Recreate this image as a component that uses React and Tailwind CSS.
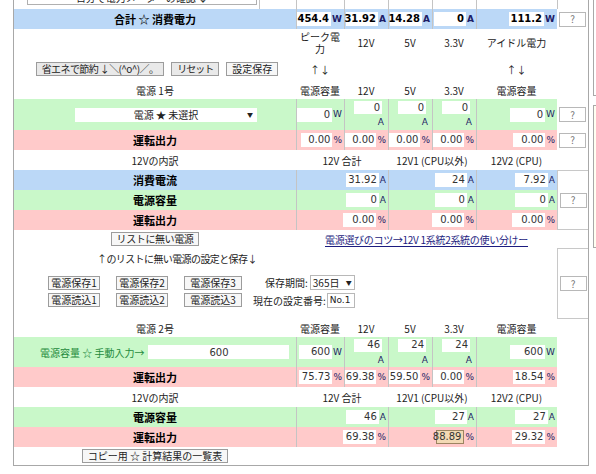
import React from 'react';

const jp = "font-['Noto_Sans_CJK_JP','Liberation_Sans',sans-serif]";
const num = "font-['DejaVu_Sans',sans-serif]";

const BLUE = 'bg-[#bbd8f7]';
const GREEN = 'bg-[#c9f8c9]';
const PINK = 'bg-[#ffcaca]';

const main6 = 'grid grid-cols-[282px_48px_44px_44px_44px_81px]';
const main4 = 'grid grid-cols-[282px_92px_88px_81px]';
const heads5 = 'grid grid-cols-[48px_44px_44px_44px_81px]';

const Q = () => (
  <span className="w-[27px] h-[15px] border border-[#b8b8b8] bg-white flex items-center justify-center text-[10px] text-[#777] leading-none">
    ?
  </span>
);

const Btn = ({ children, light, className = '' }) => (
  <span
    className={`h-[14px] px-[5px] flex items-center justify-center border border-[#9c9c9c] text-[10px] leading-none text-[#222] whitespace-nowrap ${
      light ? 'bg-[#f7f7f7]' : 'bg-[#e9e9e9]'
    } ${className}`}
  >
    {children}
  </span>
);

const Val = ({ v, u, bold, hl, w = 'w-[32px]' }) => (
  <div className="flex items-center justify-end pr-[2px] border-l border-[#c4c4c4]">
    <span
      className={`${w} h-[14px] flex items-center justify-end pr-[2px] text-[10px] leading-none ${num} ${
        bold ? 'font-bold text-black' : 'text-[#333]'
      } ${hl ? 'bg-[#f3d9b4] border border-[#9c8461]' : 'bg-white'}`}
    >
      {v}
    </span>
    <span className={`ml-[1px] text-[9px] leading-none text-[#1d1d66] ${num} ${bold ? 'font-bold' : ''}`}>{u}</span>
  </div>
);

const Val2 = ({ v }) => (
  <div className="flex flex-col items-end justify-center pr-[4px] border-l border-[#c4c4c4]">
    <span className={`w-[28px] h-[13px] mr-[2px] bg-white flex items-center justify-end pr-[2px] text-[10px] leading-none text-[#333] ${num}`}>
      {v}
    </span>
    <span className={`mt-[2px] text-[9px] leading-[12px] text-[#1d1d66] ${num}`}>A</span>
  </div>
);

const Row = ({ bg, label, children, q, h = 'h-[20px]', grid = main6 }) => (
  <div className={`flex ${h}`}>
    <div className={`${grid} ${bg} w-[543px]`}>
      <div className="flex items-center justify-center font-bold text-[11px] text-black">{label}</div>
      {children}
    </div>
    <div className="w-[31px] flex items-center justify-center">{q && <Q />}</div>
  </div>
);

const SubRow = ({ bg, label, children }) => (
  <div className={`${main4} ${bg} h-[20px]`}>
    <div className="flex items-center justify-center font-bold text-[11px] text-black">{label}</div>
    {children}
  </div>
);

const UnitHeads = () => (
  <div className={`${heads5} text-[10px] text-[#222]`}>
    <span className="text-center">電源容量</span>
    <span className="text-center">12V</span>
    <span className="text-center">5V</span>
    <span className="text-center">3.3V</span>
    <span className="text-center">電源容量</span>
  </div>
);

const Breakdown = () => (
  <div className="flex h-[20px]">
    <div className={`${main4} w-[543px] text-[10px] text-[#222]`}>
      <div className="flex items-center justify-center">12Vの内訳</div>
      <div className="flex items-center justify-center">12V 合計</div>
      <div className="flex items-center justify-center">12V1 (CPU以外)</div>
      <div className="flex items-center justify-center">12V2 (CPU)</div>
    </div>
    <div className="w-[31px]" />
  </div>
);

const CutUnit = ({ u }) => (
  <div className="flex items-end justify-end pr-[8px] pb-[7px] border-l border-[#c4c4c4] text-[9px] leading-[10px] text-[#1d1d66]">
    {u}
  </div>
);

const App = () => {
  return (
    <div className={`w-[596px] h-[474px] overflow-hidden bg-white flex ${jp}`}>
      <div className="w-[13px] shrink-0" />
      <div className="w-[576px] shrink-0 h-[466px] border-x border-b border-[#a8a8a8]">
        {/* row scrolled out at the top */}
        <div className="h-[9px] overflow-hidden flex flex-col justify-end">
          <div className="flex h-[24px] shrink-0">
            <div className={`${main6} w-[543px] h-[24px]`}>
              <div className="flex items-end">
                <div className="w-[13px]" />
                <div className="w-[230px] h-[18px] mb-[4px] border border-[#b0b0b0] bg-white text-center text-[10px] leading-[20px] text-[#222]">
                  日分で電力メーターの確認 ↓
                </div>
                <div className="w-[2px]" />
                <div className="h-full border-l border-[#c4c4c4]" />
              </div>
              <div className="border-l border-[#c4c4c4]" />
              <CutUnit u="A" />
              <CutUnit u="A" />
              <CutUnit u="A" />
              <CutUnit u="W" />
            </div>
            <div className="w-[31px] border-l border-[#c4c4c4]" />
          </div>
        </div>

        <Row bg={BLUE} label="合計 ☆ 消費電力" q>
          <Val v="454.4" u="W" bold w="w-[36px]" />
          <Val v="31.92" u="A" bold />
          <Val v="14.28" u="A" bold />
          <Val v="0" u="A" bold />
          <Val v="111.2" u="W" bold w="w-[35px]" />
        </Row>

        {/* section 1 header */}
        <div className="flex h-[70px]">
          <div className="w-[282px] flex flex-col">
            <div className="h-[27px]" />
            <div className="h-[26px] flex items-center justify-center gap-[7px] pl-[4px]">
              <Btn className="tracking-[-0.6px]">省エネで節約 ↓＼(^o^)／。</Btn>
              <Btn className="tracking-[-1px]">リセット</Btn>
              <Btn light>設定保存</Btn>
            </div>
            <div className="h-[17px] flex items-center justify-center text-[10px] text-[#222]">電源 1号</div>
          </div>
          <div className="w-[261px] flex flex-col text-[10px] text-[#222]">
            <div className={`${heads5} h-[27px] items-center`}>
              <span className="text-center leading-[12px] px-[2px]">ピーク電力</span>
              <span className="text-center">12V</span>
              <span className="text-center">5V</span>
              <span className="text-center">3.3V</span>
              <span className="text-center">アイドル電力</span>
            </div>
            <div className={`${heads5} h-[26px] items-center`}>
              <span className="text-center">↑↓</span>
              <span />
              <span />
              <span />
              <span className="text-center">↑↓</span>
            </div>
            <div className="h-[17px] flex items-center">
              <div className="w-full">
                <UnitHeads />
              </div>
            </div>
          </div>
        </div>

        <div className="flex h-[31px]">
          <div className={`${main6} ${GREEN} w-[543px]`}>
            <div className="flex items-center pl-[61px]">
              <div className="w-[182px] h-[14px] bg-white flex items-center justify-center relative text-[10px] text-[#222]">
                電源 ★ 未選択
                <span className="absolute right-[4px] top-[2px] text-[6px]">▼</span>
              </div>
            </div>
            <Val v="0" u="W" w="w-[35px]" />
            <Val2 v="0" />
            <Val2 v="0" />
            <Val2 v="0" />
            <Val v="0" u="W" w="w-[35px]" />
          </div>
          <div className="w-[31px] flex items-center justify-center">
            <Q />
          </div>
        </div>

        <Row bg={PINK} label="運転出力" q>
          <Val v="0.00" u="%" w="w-[31px]" />
          <Val v="0.00" u="%" w="w-[31px]" />
          <Val v="0.00" u="%" w="w-[31px]" />
          <Val v="0.00" u="%" w="w-[31px]" />
          <Val v="0.00" u="%" />
        </Row>

        <Breakdown />

        <div className="flex h-[60px]">
          <div className="w-[543px] flex flex-col">
            <SubRow bg={BLUE} label="消費電流">
              <Val v="31.92" u="A" w="w-[33px]" />
              <Val v="24" u="A" w="w-[32px]" />
              <Val v="7.92" u="A" w="w-[33px]" />
            </SubRow>
            <SubRow bg={GREEN} label="電源容量">
              <Val v="0" u="A" w="w-[33px]" />
              <Val v="0" u="A" w="w-[32px]" />
              <Val v="0" u="A" w="w-[33px]" />
            </SubRow>
            <SubRow bg={PINK} label="運転出力">
              <Val v="0.00" u="%" w="w-[33px]" />
              <Val v="0.00" u="%" w="w-[32px]" />
              <Val v="0.00" u="%" w="w-[33px]" />
            </SubRow>
          </div>
          <div className="w-[31px] border-l border-y border-[#c8c8c8] flex items-center justify-center">
            <Q />
          </div>
        </div>

        {/* custom power supply block */}
        <div className="flex h-[18px]">
          <div className="w-[282px] flex items-center justify-center">
            <Btn light className="tracking-[-0.4px]">リストに無い電源</Btn>
          </div>
          <div className="w-[261px] flex items-center justify-center">
            <span className="text-[10px] text-[#1c1c80] underline underline-offset-2 whitespace-nowrap tracking-[-0.3px]">
              電源選びのコツ→12V 1系統2系統の使い分けー
            </span>
          </div>
          <div className="w-[31px]" />
        </div>

        <div className="flex h-[71px]">
          <div className="w-[543px] flex flex-col text-[10px] text-[#222]">
            <div className="h-[20px] flex items-center pl-[83px] tracking-[-0.6px]">↑のリストに無い電源の設定と保存↓</div>
            <div className="flex items-center pl-[34px] mt-[7px] gap-[11px]">
              <div className="grid grid-cols-[52px_52px_58px] gap-x-[16px] gap-y-[3px]">
                <Btn light>電源保存1</Btn>
                <Btn light>電源保存2</Btn>
                <Btn light>電源保存3</Btn>
                <Btn light>電源読込1</Btn>
                <Btn light>電源読込2</Btn>
                <Btn light>電源読込3</Btn>
              </div>
              <div className="flex flex-col items-end gap-[3px] text-[10px]">
                <div className="flex items-center gap-[2px]">
                  <span>保存期間:</span>
                  <span className="w-[45px] h-[15px] border border-[#b8b8b8] bg-white flex items-center justify-between px-[2px] text-[10px]">
                    365日<span className="text-[6px]">▼</span>
                  </span>
                </div>
                <div className="flex items-center gap-[1px]">
                  <span>現在の設定番号:</span>
                  <span className={`w-[28px] h-[15px] border border-[#b8b8b8] bg-white flex items-center px-[2px] text-[9px] ${num}`}>
                    No.1
                  </span>
                </div>
              </div>
            </div>
          </div>
          <div className="w-[31px] border-l border-y border-[#c8c8c8] flex items-center justify-center">
            <Q />
          </div>
        </div>

        {/* section 2 */}
        <div className="flex h-[18px] items-center text-[10px] text-[#222]">
          <div className="w-[282px] text-center">電源 2号</div>
          <div className="w-[261px]">
            <UnitHeads />
          </div>
        </div>

        <div className="flex h-[30px]">
          <div className={`${main6} ${GREEN} w-[543px]`}>
            <div className="flex items-center pl-[26px] gap-[4px]">
              <span className="text-[10px] text-[#1f8a3c] whitespace-nowrap">電源容量 ☆ 手動入力→</span>
              <span className={`w-[141px] h-[14px] bg-white flex items-center justify-center text-[10px] text-[#333] ${num}`}>600</span>
            </div>
            <Val v="600" u="W" w="w-[33px]" />
            <Val2 v="46" />
            <Val2 v="24" />
            <Val2 v="24" />
            <Val v="600" u="W" w="w-[35px]" />
          </div>
          <div className="w-[31px]" />
        </div>

        <Row bg={PINK} label="運転出力">
          <Val v="75.73" u="%" w="w-[33px]" />
          <Val v="69.38" u="%" w="w-[31px]" />
          <Val v="59.50" u="%" w="w-[31px]" />
          <Val v="0.00" u="%" w="w-[31px]" />
          <Val v="18.54" u="%" />
        </Row>

        <Breakdown />

        <div className="flex h-[40px]">
          <div className="w-[543px] flex flex-col">
            <SubRow bg={GREEN} label="電源容量">
              <Val v="46" u="A" w="w-[33px]" />
              <Val v="27" u="A" w="w-[32px]" />
              <Val v="27" u="A" w="w-[33px]" />
            </SubRow>
            <SubRow bg={PINK} label="運転出力">
              <Val v="69.38" u="%" w="w-[33px]" />
              <Val v="88.89" u="%" w="w-[28px]" hl />
              <Val v="29.32" u="%" w="w-[33px]" />
            </SubRow>
          </div>
          <div className="w-[31px]" />
        </div>

        <div className="flex h-[18px] items-center">
          <div className="w-[282px] flex justify-center">
            <Btn light>コピー用 ☆ 計算結果の一覧表</Btn>
          </div>
        </div>
      </div>
      <div className="w-[4px] shrink-0" />
      <div className="w-[3px] shrink-0 flex flex-col">
        <div className="h-[96px] border-l border-b border-[#a8a8a8]" />
        <div className="h-[143px] mt-[9px] border-l border-y border-[#a8a8a8] bg-[#fffff2]" />
      </div>
    </div>
  );
};

export default App;
